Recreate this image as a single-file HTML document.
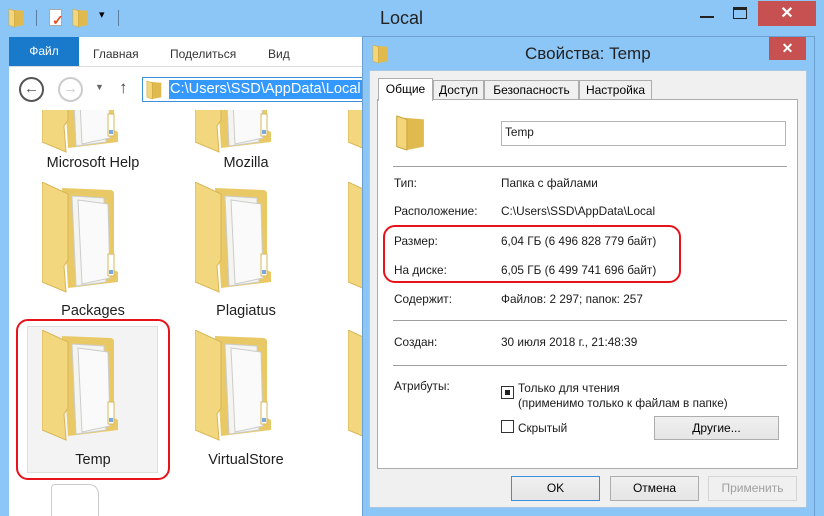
<!DOCTYPE html>
<html><head><meta charset="utf-8"><style>
*{margin:0;padding:0;box-sizing:border-box}
body{width:824px;height:516px;overflow:hidden;position:relative;background:#8cc6f7;font-family:"Liberation Sans",sans-serif;color:#000}
.a{position:absolute}
.t{position:absolute;white-space:nowrap}
.lbl{font-size:14.5px;color:#1e1e1e;text-align:center;width:130px}
.d{font-size:11.8px;color:#1a1a1a}
.btn{position:absolute;border:1px solid #adadad;background:linear-gradient(#f0f0f0,#e5e5e5);font-size:12px;text-align:center;line-height:23px}
.sep{position:absolute;height:1px;background:#a0a0a0;left:393px;width:394px}
</style></head><body>
<svg width="0" height="0" style="position:absolute"><defs>
<symbol id="fold" viewBox="0 0 76 112">
<path d="M20 6 L68 8 Q72 8 72 12 L72 88 L76 90 L76 100 L26 106 Z" fill="#e9c866"/>
<path d="M30 14 L62 16 L64 100 L34 104 Z" fill="#f4f4f0" stroke="#ccc" stroke-width="1"/>
<path d="M36 18 L66 22 L68 96 L40 102 Z" fill="#fafafa" stroke="#ccc" stroke-width="1"/>
<rect x="66" y="72" width="6" height="22" fill="#fff" stroke="#d9b85a"/>
<rect x="67" y="88" width="4" height="4" fill="#7aa8e0"/>
<path d="M0 0 L26 12 L26 78 L22 84 L24 110 L0 100 Z" fill="#f2d77f" stroke="#d8b656" stroke-width="1"/>
</symbol>
<symbol id="sfold" viewBox="0 0 20 22">
<path d="M5 2 L17 3 L17 19 L7 21 Z" fill="#e0b94f"/>
<path d="M1 1 L7 3 L7 21 L1 19 Z" fill="#f4d67a" stroke="#c9a43f" stroke-width=".6"/>
</symbol>
</defs></svg>

<!-- explorer title -->
<svg class="a" style="left:8px;top:8px" width="18" height="20"><use href="#sfold"/></svg>
<div class="a" style="left:36px;top:10px;width:1px;height:16px;background:#5a7da0"></div>
<div class="a" style="left:49px;top:9px;width:13px;height:17px;background:#fff;border:1px solid #aaa"></div>
<div class="t" style="left:52px;top:12px;color:#e0502a;font-size:14px;font-weight:bold">✓</div>
<svg class="a" style="left:72px;top:8px" width="18" height="20"><use href="#sfold"/></svg>
<div class="t" style="left:99px;top:8px;font-size:11px">▾</div>
<div class="a" style="left:118px;top:10px;width:1px;height:16px;background:#5a7da0"></div>
<div class="t" style="left:380px;top:8px;font-size:18px;color:#222">Local</div>
<div class="a" style="left:700px;top:16px;width:14px;height:2px;background:#222"></div>
<div class="a" style="left:733px;top:7px;width:14px;height:12px;border:1px solid #222;border-top:3px solid #222"></div>
<div class="a" style="left:758px;top:1px;width:58px;height:25px;background:#c75050;color:#fff;font-size:16px;text-align:center;line-height:25px;font-weight:bold">✕</div>

<!-- explorer body -->
<div class="a" style="left:9px;top:37px;width:806px;height:479px;background:#fff"></div>
<div class="a" style="left:9px;top:37px;width:70px;height:29px;background:#1979ca;color:#fff;font-size:12px;text-align:center;line-height:29px">Файл</div>
<div class="t" style="left:93px;top:47px;font-size:12px;color:#333">Главная</div>
<div class="t" style="left:170px;top:47px;font-size:12px;color:#333">Поделиться</div>
<div class="t" style="left:268px;top:47px;font-size:12px;color:#333">Вид</div>
<div class="a" style="left:9px;top:66px;width:806px;height:1px;background:#dadbdc"></div>
<div class="a" style="left:19px;top:77px;width:25px;height:25px;border:2px solid #555;border-radius:50%;font-size:15px;text-align:center;line-height:20px;color:#555;font-weight:bold">←</div>
<div class="a" style="left:58px;top:77px;width:25px;height:25px;border:2px solid #ccc;border-radius:50%;font-size:15px;text-align:center;line-height:20px;color:#ccc;font-weight:bold">→</div>
<div class="t" style="left:95px;top:82px;font-size:9px;color:#666">▼</div>
<div class="t" style="left:119px;top:78px;font-size:17px;color:#444">↑</div>
<div class="a" style="left:142px;top:77px;width:230px;height:25px;border:1px solid #3c8fdc;overflow:hidden">
<svg class="a" style="left:3px;top:2px" width="18" height="20"><use href="#sfold"/></svg>
<div class="t" style="left:26px;top:2px;font-size:14.6px;color:#fff;background:#3399ff;padding:0 1px;line-height:19px">C:\Users\SSD\AppData\Local</div>
</div>

<!-- folders -->
<div class="a" style="left:9px;top:110px;width:806px;height:406px;overflow:hidden">
<svg class="a" style="left:33px;top:-68px" width="76" height="112"><use href="#fold"/></svg>
<svg class="a" style="left:186px;top:-68px" width="76" height="112"><use href="#fold"/></svg>
<svg class="a" style="left:339px;top:-68px" width="76" height="112"><use href="#fold"/></svg>
<svg class="a" style="left:33px;top:72px" width="76" height="112"><use href="#fold"/></svg>
<svg class="a" style="left:186px;top:72px" width="76" height="112"><use href="#fold"/></svg>
<svg class="a" style="left:339px;top:72px" width="76" height="112"><use href="#fold"/></svg>
<div class="a" style="left:18px;top:216px;width:131px;height:147px;background:#f3f3f3;border:1px solid #dedede"></div>
<svg class="a" style="left:33px;top:220px" width="76" height="112"><use href="#fold"/></svg>
<svg class="a" style="left:186px;top:220px" width="76" height="112"><use href="#fold"/></svg>
<svg class="a" style="left:339px;top:220px" width="76" height="112"><use href="#fold"/></svg>
<div class="a" style="left:42px;top:374px;width:48px;height:40px;background:#fff;border:1px solid #ccc;border-radius:4px 10px 0 0"></div>
</div>
<div class="t lbl" style="left:28px;top:155px">Microsoft Help</div>
<div class="t lbl" style="left:181px;top:155px">Mozilla</div>
<div class="t lbl" style="left:28px;top:303px">Packages</div>
<div class="t lbl" style="left:181px;top:303px">Plagiatus</div>
<div class="t lbl" style="left:28px;top:452px">Temp</div>
<div class="t lbl" style="left:181px;top:452px">VirtualStore</div>
<div class="a" style="left:16px;top:319px;width:154px;height:161px;border:2.5px solid #e8121b;border-radius:12px"></div>

<!-- dialog -->
<div class="a" style="left:362px;top:36px;width:453px;height:480px;background:#8cc6f7;border:1px solid #6a9fd0;border-bottom:none"></div>
<div class="a" style="left:815px;top:36px;width:9px;height:480px;background:#8cc6f7"></div>
<svg class="a" style="left:372px;top:44px" width="18" height="20"><use href="#sfold"/></svg>
<div class="t" style="left:525px;top:44px;font-size:17px;color:#222">Свойства: Temp</div>
<div class="a" style="left:769px;top:37px;width:37px;height:23px;background:#c75050;color:#fff;font-size:14px;text-align:center;line-height:23px;font-weight:bold">✕</div>
<div class="a" style="left:369px;top:70px;width:438px;height:438px;background:#f0f0f0;border:1px solid #a9c7e3"></div>
<div class="a" style="left:377px;top:99px;width:421px;height:370px;background:#fff;border:1px solid #adadad"></div>
<div class="a" style="left:433px;top:80px;width:51px;height:20px;background:#f0f0f0;border:1px solid #adadad;font-size:12px;line-height:18px;text-align:center">Доступ</div>
<div class="a" style="left:484px;top:80px;width:95px;height:20px;background:#f0f0f0;border:1px solid #adadad;font-size:12px;line-height:18px;text-align:center">Безопасность</div>
<div class="a" style="left:579px;top:80px;width:73px;height:20px;background:#f0f0f0;border:1px solid #adadad;font-size:12px;line-height:18px;text-align:center">Настройка</div>
<div class="a" style="left:378px;top:78px;width:55px;height:23px;background:#fff;border:1px solid #adadad;border-bottom:none;font-size:12px;line-height:20px;text-align:center">Общие</div>

<svg class="a" style="left:395px;top:113px" width="34" height="40" viewBox="0 0 20 22"><use href="#sfold"/></svg>
<div class="a" style="left:501px;top:121px;width:285px;height:25px;border:1px solid #b5b5b5"></div>
<div class="t d" style="left:505px;top:125px">Temp</div>
<div class="sep" style="top:166px"></div>

<div class="t d" style="left:394px;top:176px">Тип:</div><div class="t d" style="left:501px;top:176px">Папка с файлами</div>
<div class="t d" style="left:394px;top:204px">Расположение:</div><div class="t d" style="left:501px;top:204px">C:\Users\SSD\AppData\Local</div>
<div class="t d" style="left:394px;top:234px">Размер:</div><div class="t d" style="left:501px;top:234px">6,04 ГБ (6 496 828 779 байт)</div>
<div class="t d" style="left:394px;top:263px">На диске:</div><div class="t d" style="left:501px;top:263px">6,05 ГБ (6 499 741 696 байт)</div>
<div class="t d" style="left:394px;top:292px">Содержит:</div><div class="t d" style="left:501px;top:292px">Файлов: 2 297; папок: 257</div>
<div class="sep" style="top:320px"></div>
<div class="t d" style="left:394px;top:335px">Создан:</div><div class="t d" style="left:501px;top:335px">30 июля 2018 г., 21:48:39</div>
<div class="sep" style="top:365px"></div>
<div class="a" style="left:383px;top:225px;width:298px;height:58px;border:2.5px solid #e8121b;border-radius:12px"></div>

<div class="t d" style="left:394px;top:379px">Атрибуты:</div>
<div class="a" style="left:501px;top:386px;width:13px;height:13px;border:1px solid #333;background:#fff"></div>
<div class="a" style="left:505px;top:390px;width:5px;height:5px;background:#222"></div>
<div class="t d" style="left:518px;top:381px;line-height:15px">Только для чтения<br>(применимо только к файлам в папке)</div>
<div class="a" style="left:501px;top:420px;width:13px;height:13px;border:1px solid #333;background:#fff"></div>
<div class="t d" style="left:518px;top:421px">Скрытый</div>
<div class="btn" style="left:654px;top:416px;width:125px;height:24px">Другие...</div>

<div class="btn" style="left:511px;top:476px;width:89px;height:25px;border-color:#3c8fdc">OK</div>
<div class="btn" style="left:610px;top:476px;width:89px;height:25px">Отмена</div>
<div class="btn" style="left:708px;top:476px;width:89px;height:25px;color:#a0a0a0;border-color:#d5d5d5;background:#f0f0f0">Применить</div>
</body></html>
